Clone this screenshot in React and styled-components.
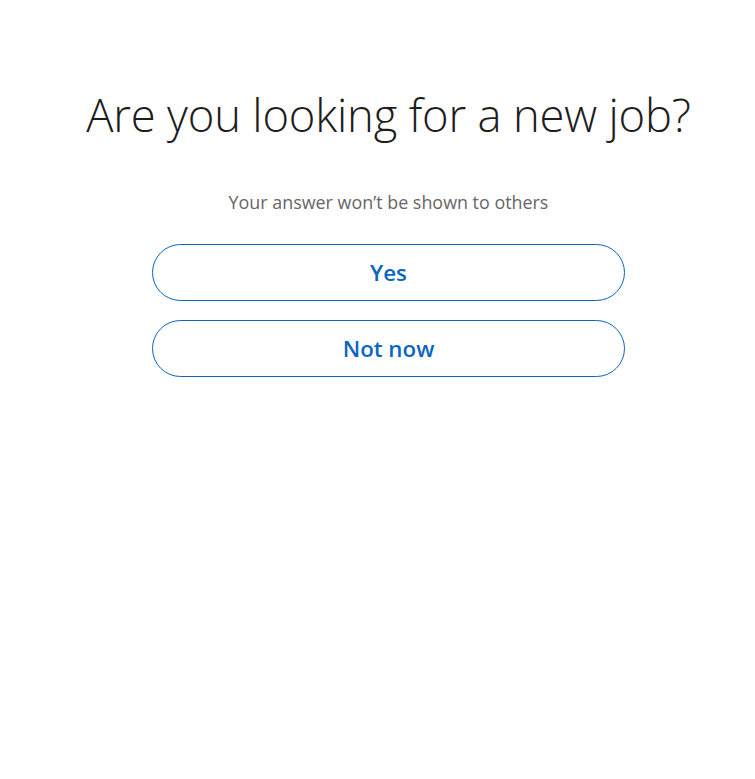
import React from "react";
import styled, { createGlobalStyle } from "styled-components";

const Global = createGlobalStyle`
  html, body { margin: 0; padding: 0; background: #fff; }
  body { font-family: "Open Sans", "Noto Sans", sans-serif; }
`;

const Page = styled.main`
  display: flex;
  flex-direction: column;
  align-items: center;
  padding: 78px 0 0 22px;
  min-height: 779px;
  box-sizing: border-box;
`;

const Title = styled.h1`
  margin: 0;
  font-family: "Open Sans", sans-serif;
  font-weight: 300;
  font-size: 45.4px;
  line-height: 72px;
  color: #1d1d1d;
  letter-spacing: -0.2px;
`;

const Subtitle = styled.p`
  margin: 40px 0 0;
  font-size: 17.9px;
  line-height: 24px;
  color: #666;
`;

const Actions = styled.div`
  display: flex;
  flex-direction: column;
  gap: 19px;
  margin-top: 30px;
  width: 473px;
`;

const Choice = styled.button`
  height: 57px;
  border: 1px solid #0a66c2;
  border-radius: 29px;
  background: #fff;
  color: #0a66c2;
  font-family: "Open Sans", sans-serif;
  font-weight: 600;
  font-size: 22.3px;
  cursor: pointer;
`;

export default function App() {
  return (
    <>
      <Global />
      <Page>
        <Title>Are you looking for a new job?</Title>
        <Subtitle>Your answer won’t be shown to others</Subtitle>
        <Actions>
          <Choice>Yes</Choice>
          <Choice>Not now</Choice>
        </Actions>
      </Page>
    </>
  );
}
